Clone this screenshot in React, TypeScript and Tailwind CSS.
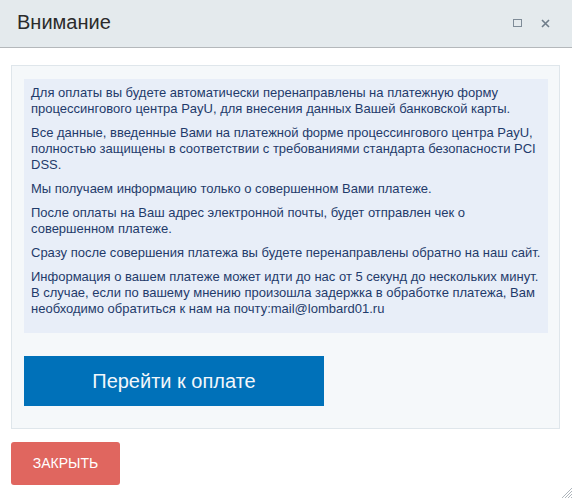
import React from 'react'

const paragraphs = [
  'Для оплаты вы будете автоматически перенаправлены на платежную форму процессингового центра PayU, для внесения данных Вашей банковской карты.',
  'Все данные, введенные Вами на платежной форме процессингового центра PayU, полностью защищены в соответствии с требованиями стандарта безопасности PCI DSS.',
  'Мы получаем информацию только о совершенном Вами платеже.',
  'После оплаты на Ваш адрес электронной почты, будет отправлен чек о совершенном платеже.',
  'Сразу после совершения платежа вы будете перенаправлены обратно на наш сайт.',
  'Информация о вашем платеже может идти до нас от 5 секунд до нескольких минут. В случае, если по вашему мнению произошла задержка в обработке платежа, Вам необходимо обратиться к нам на почту:mail@lombard01.ru',
]

export default function App() {
  return (
    <div
      className="relative w-[572px] h-[498px] bg-white overflow-hidden"
      style={{ fontFamily: '"Liberation Sans", Arial, sans-serif' }}
    >
      {/* title bar */}
      <div className="h-[48px] bg-[#e4eaed] border-b border-[#b4b8bb] flex items-center pl-[17px] pr-[22px]">
        <h1 className="flex-1 text-[20px] leading-none text-[#2b2b2b] -mt-[3px]">Внимание</h1>
        <div className="flex items-center gap-[19px] -mt-[1px]">
          <span className="block w-[9px] h-[8px] border border-[#7e8b97]" />
          <svg width="9" height="9" viewBox="0 0 9 9" className="text-[#6f7d8a]">
            <path d="M1 1 L8 8 M8 1 L1 8" stroke="currentColor" strokeWidth="1.6" />
          </svg>
        </div>
      </div>

      <div className="px-[11px] pt-[17px]">
        <div className="w-[549px] border border-[#dfe6eb] bg-[#f5f8fa] pt-[13px] pb-[22px] pl-[12px]">
          <div className="w-[524px] h-[254px] bg-[#e8eef8] pl-[7px] pr-[6px] pt-[6px] flex flex-col gap-[8px] text-[13px] leading-[16px] text-[#1f3b6b]">
            {paragraphs.map((p) => (
              <p key={p}>{p}</p>
            ))}
          </div>
          <button className="mt-[23px] w-[300px] h-[50px] bg-[#0071b9] text-[#f2f7fb] text-[20px] flex items-center justify-center">
            Перейти к оплате
          </button>
        </div>

        <button className="mt-[13px] w-[109px] h-[43px] rounded-[3px] bg-[#e0665f] text-white text-[14px] flex items-center justify-center">
          ЗАКРЫТЬ
        </button>
      </div>

      {/* resize grip */}
      <svg width="12" height="12" viewBox="0 0 12 12" className="absolute right-0 bottom-0">
        <path d="M12 2 L2 12 M12 5 L5 12 M12 8 L8 12 M12 11 L11 12" stroke="#9aa3ab" strokeWidth="0.8" />
      </svg>
    </div>
  )
}
